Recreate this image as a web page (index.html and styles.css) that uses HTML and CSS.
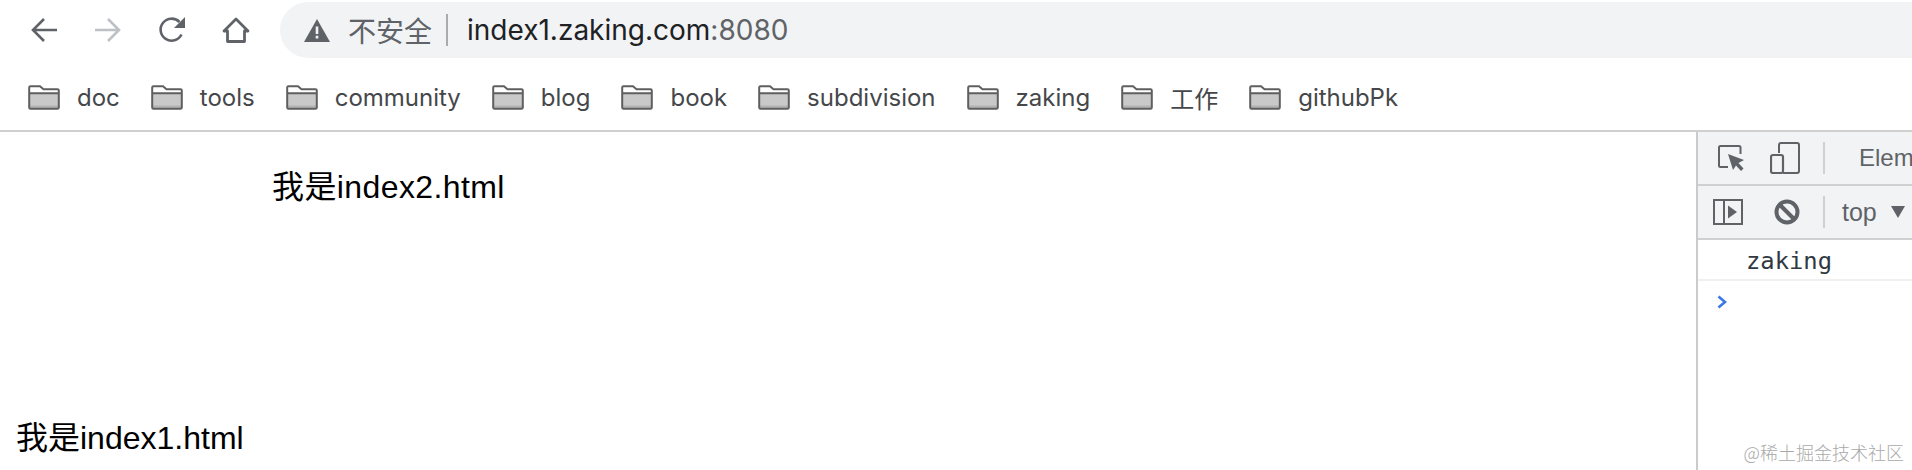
FILE: index.html
```html
<!DOCTYPE html>
<html>
<head>
	<meta charset="utf-8">
	<title>index1.zaking.com:8080</title>
	<link rel="stylesheet" href="styles.css">
</head>
<body>
	<svg class="defs">
		<symbol id="folder" viewBox="0 0 32 25">
			<path d="M1.2 3V22.5Q1.2 23.8 2.5 23.8H29.5Q30.8 23.8 30.8 22.5V5.5Q30.8 4.2 29.5 4.2H15.5L12 1.2H2.5Q1.2 1.2 1.2 2.5Z" fill="#fff"/>
			<path d="M1.2 8.5H30.8V22.5Q30.8 23.8 29.5 23.8H2.5Q1.2 23.8 1.2 22.5Z" fill="#c9c9c9"/>
			<path d="M1.2 20.5H30.8V22.5Q30.8 23.8 29.5 23.8H2.5Q1.2 23.8 1.2 22.5Z" fill="#b4b4b4"/>
			<path d="M1.2 2.5V22.5Q1.2 23.8 2.5 23.8H29.5Q30.8 23.8 30.8 22.5V5.5Q30.8 4.2 29.5 4.2H15.5L12 1.2H2.5Q1.2 1.2 1.2 2.5ZM1.2 8.2H30.8" fill="none" stroke="#5f5f5f" stroke-width="2"/>
		</symbol>
	</svg>

	<div class="toolbar">
		<div class="navBtns">
			<svg class="navIcon" viewBox="0 0 28 28"><path d="M27 14H3M14 3 3 14 14 25" fill="none" stroke="#5f6368" stroke-width="2.6"/></svg>
			<svg class="navIcon" viewBox="0 0 28 28"><path d="M1 14H25M14 3 25 14 14 25" fill="none" stroke="#bdc1c6" stroke-width="2.6"/></svg>
			<svg class="navIcon" viewBox="0 0 28 28"><path d="M23.5 18.5A11 11 0 1 1 21.5 6" fill="none" stroke="#5f6368" stroke-width="2.6"/><path d="M27 1V12H16Z" fill="#5f6368"/></svg>
			<svg class="navIcon" viewBox="0 0 28 28"><path d="M14 3 26 15H22.5V25.5H5.5V15H2Z" fill="none" stroke="#5f6368" stroke-width="2.8" stroke-linejoin="round"/></svg>
		</div>
		<div class="omnibox">
			<svg class="warnIcon" viewBox="0 0 26 23"><path d="M13 0 26 23H0Z" fill="#5f6368"/><path d="M11.7 7.5H14.3V15H11.7ZM11.7 16.8H14.3V19.4H11.7Z" fill="#f1f3f4"/></svg>
			<span class="notSecure">不安全</span>
			<span class="urlSep"></span>
			<span class="url">index1.zaking.com<span class="urlPort">:8080</span></span>
		</div>
	</div>

	<div class="bookmarks">
		<div class="bookmark"><svg class="folder"><use href="#folder"/></svg>doc</div>
		<div class="bookmark"><svg class="folder"><use href="#folder"/></svg>tools</div>
		<div class="bookmark"><svg class="folder"><use href="#folder"/></svg>community</div>
		<div class="bookmark"><svg class="folder"><use href="#folder"/></svg>blog</div>
		<div class="bookmark"><svg class="folder"><use href="#folder"/></svg>book</div>
		<div class="bookmark"><svg class="folder"><use href="#folder"/></svg>subdivision</div>
		<div class="bookmark"><svg class="folder"><use href="#folder"/></svg>zaking</div>
		<div class="bookmark"><svg class="folder"><use href="#folder"/></svg>工作</div>
		<div class="bookmark"><svg class="folder"><use href="#folder"/></svg>githubPk</div>
	</div>

	<div class="main">
		<div class="page">
			<div class="frameText">我是index2.html</div>
			<div class="pageText">我是index1.html</div>
		</div>
		<div class="devtools">
			<div class="dtBar">
				<svg class="inspectIcon" viewBox="0 0 27 26"><path d="M10 22H2.5Q1 22 1 20.5V2.5Q1 1 2.5 1H21Q22.5 1 22.5 2.5V9" fill="none" stroke="#5f6368" stroke-width="2"/><path d="M10 9 26 15 20.5 18 25.5 23.5 23 26 18 20.5 15 25Z" fill="#5f6368"/></svg>
				<svg class="deviceIcon" viewBox="0 0 30 32"><path d="M9 11V3Q9 1 11 1H27Q29 1 29 3V29Q29 31 27 31H13" fill="none" stroke="#5f6368" stroke-width="2"/><rect x="1" y="13" width="12" height="18" rx="2" fill="#f1f3f4" stroke="#5f6368" stroke-width="2.2"/></svg>
				<span class="dtSep"></span>
				<span class="dtTab">Elem</span>
			</div>
			<div class="dtBar">
				<svg class="panelIcon" viewBox="0 0 30 26"><path d="M1 1H29V25H1ZM11 1V25" fill="none" stroke="#5f6368" stroke-width="2"/><path d="M15 6.5 24 13 15 19.5Z" fill="#5f6368"/></svg>
				<svg class="clearIcon" viewBox="0 0 26 26"><circle cx="13" cy="13" r="10.5" fill="none" stroke="#5f6368" stroke-width="4"/><path d="M5.5 5.5 20.5 20.5" stroke="#5f6368" stroke-width="4"/></svg>
				<span class="dtSep dtSepLow"></span>
				<span class="dtContext">top</span>
				<span class="dtArrow"></span>
			</div>
			<div class="logRow">zaking</div>
			<div class="promptRow">
				<svg class="promptIcon" viewBox="0 0 10 14"><path d="M1.5 1.5 8 7 1.5 12.5" fill="none" stroke="#3b78e7" stroke-width="2.6"/></svg>
			</div>
		</div>
	</div>

	<div class="watermark">@稀土掘金技术社区</div>
</body>
</html>
```

FILE: styles.css
```css
* {
	box-sizing: border-box;
}
html, body {
	margin: 0;
	height: 470px;
	overflow: hidden;
	background-color: #fff;
}
body {
	position: relative;
	font-family: "Liberation Sans", "Noto Sans CJK SC", sans-serif;
}
.defs {
	display: none;
}

/* browser chrome */
.toolbar {
	display: flex;
	align-items: center;
	height: 60px;
	padding-left: 30px;
}
.navBtns {
	display: flex;
	gap: 36px;
	width: 250px;
}
.navIcon {
	width: 28px;
	height: 28px;
}
.omnibox {
	flex: 1;
	display: flex;
	align-items: center;
	height: 56px;
	padding-left: 24px;
	background-color: #f1f3f4;
	border-radius: 28px 0 0 28px;
}
.warnIcon {
	width: 26px;
	height: 23px;
}
.notSecure {
	margin-left: 18px;
	font-size: 28px;
	color: #5f6368;
}
.urlSep {
	width: 2px;
	height: 32px;
	margin: 0 19px 0 14px;
	background-color: #a8abaf;
}
.url {
	font-family: Inter, "Liberation Sans", sans-serif;
	font-size: 28px;
	color: #202124;
}
.urlPort {
	color: #5f6368;
}

.bookmarks {
	display: flex;
	align-items: center;
	height: 72px;
	padding: 4px 0 0 28px;
	border-bottom: 2px solid #d0d0d0;
}
.bookmark {
	display: flex;
	align-items: center;
	gap: 17px;
	margin-right: 31px;
	font-family: Inter, "Noto Sans CJK SC", sans-serif;
	font-size: 24px;
	color: #45474a;
}
.folder {
	width: 32px;
	height: 25px;
}

/* page area */
.main {
	display: flex;
	height: 338px;
}
.page {
	width: 1696px;
	display: flex;
	flex-direction: column;
	justify-content: space-between;
	padding: 29px 0 12px 16px;
	font-size: 32px;
	color: #000;
}
.frameText {
	margin-left: 256px;
	letter-spacing: 0.4px;
}

/* devtools */
.devtools {
	flex: 1;
	border-left: 2px solid #cbcbcb;
	overflow: hidden;
}
.dtBar {
	display: flex;
	align-items: center;
	height: 54px;
	background-color: #f1f3f4;
	border-bottom: 2px solid #d0d0d0;
	white-space: nowrap;
}
.dtBar svg,
.dtBar span {
	flex-shrink: 0;
}
.inspectIcon {
	width: 27px;
	height: 26px;
	margin-left: 20px;
}
.deviceIcon {
	width: 30px;
	height: 32px;
	margin-left: 25px;
}
.dtSep {
	width: 2px;
	height: 32px;
	margin-left: 23px;
	background-color: #d0d0d0;
}
.dtTab {
	margin-left: 34px;
	font-size: 24px;
	color: #5f6368;
}
.panelIcon {
	width: 30px;
	height: 26px;
	margin-left: 15px;
}
.clearIcon {
	width: 26px;
	height: 26px;
	margin-left: 31px;
}
.dtSepLow {
	margin-left: 23px;
}
.dtContext {
	margin-left: 17px;
	font-size: 25px;
	color: #5f6368;
}
.dtArrow {
	width: 0;
	height: 0;
	margin-left: 14px;
	border-left: 7px solid transparent;
	border-right: 7px solid transparent;
	border-top: 12px solid #5f6368;
}
.logRow {
	height: 41px;
	padding-left: 48px;
	line-height: 43px;
	font-family: "DejaVu Sans Mono", monospace;
	font-size: 23.8px;
	color: #303942;
	border-bottom: 2px solid #f0f0f0;
}
.promptRow {
	padding: 14px 0 0 19px;
}
.promptIcon {
	display: block;
	width: 10px;
	height: 14px;
}

.watermark {
	position: absolute;
	right: 8px;
	bottom: 5px;
	font-family: "Noto Sans CJK SC", sans-serif;
	font-size: 18px;
	font-weight: 300;
	color: #a9a9a9;
}
```
